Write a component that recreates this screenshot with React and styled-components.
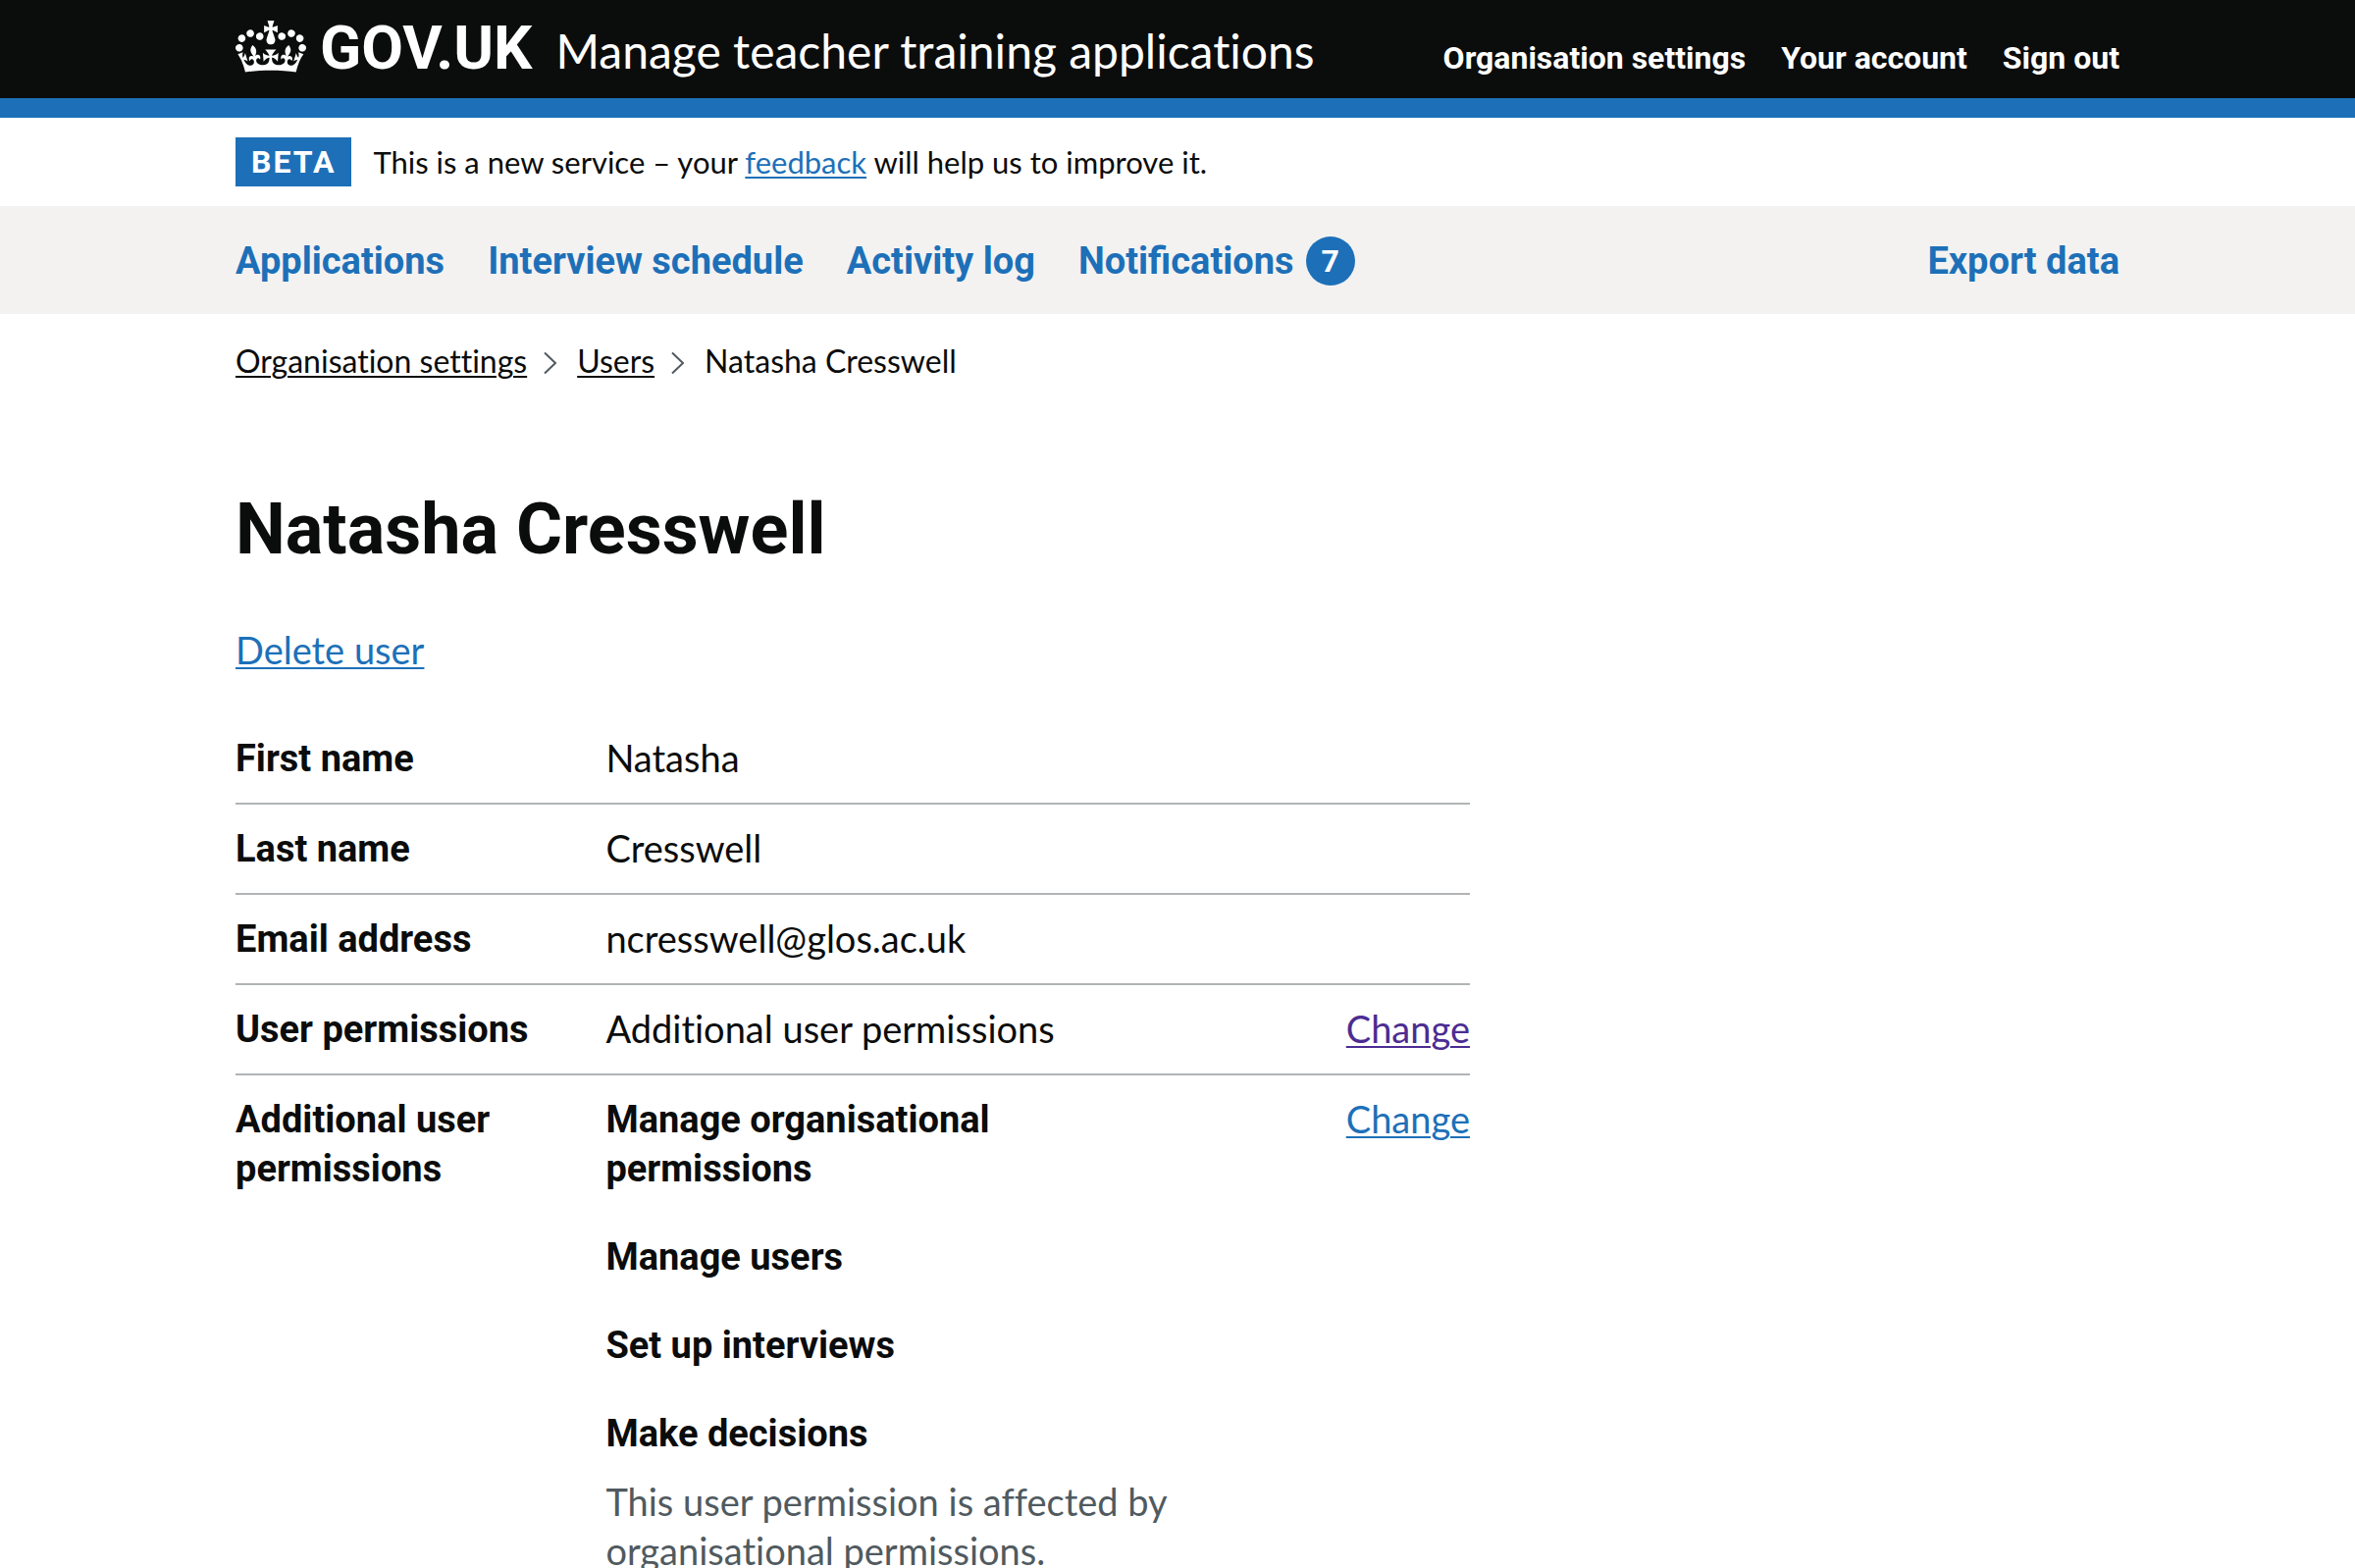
import React from "react";
import styled, { createGlobalStyle } from "styled-components";

const color = {
  ink: "#0b0c0c",
  blue: "#1d70b8",
  visited: "#4c2c92",
  secondary: "#505a5f",
  border: "#b1b4b6",
  panel: "#f3f2f1",
  white: "#ffffff",
};

const font = {
  text: '"Lato", "Liberation Sans", sans-serif',
  bold: '"Roboto", "Liberation Sans", sans-serif',
};

const GlobalStyle = createGlobalStyle`
  *, *::before, *::after { box-sizing: border-box; }
  body {
    margin: 0;
    background: ${color.white};
    color: ${color.ink};
    font-family: ${font.text};
    font-size: 38px;
    line-height: 50px;
    font-feature-settings: "liga" 0;
    -webkit-font-smoothing: antialiased;
  }
  h1, p, ul, ol, dl, dd { margin: 0; padding: 0; }
  ul, ol { list-style: none; }
`;

const Container = styled.div`
  max-width: 1920px;
  margin: 0 auto;

  @media (max-width: 2040px) {
    margin: 0 60px;
  }
`;

const Link = styled.a`
  color: ${(p) => p.$color || color.blue};
  text-decoration: underline;
  text-decoration-thickness: 2px;
  text-underline-offset: 3px;
`;

/* Header */

const Header = styled.header`
  background: ${color.ink};
  border-bottom: 20px solid ${color.blue};
  color: ${color.white};
`;

const HeaderBar = styled(Container)`
  display: flex;
  flex-wrap: wrap;
  justify-content: space-between;
  align-items: baseline;
  padding: 19px 0 21px;
`;

const Brand = styled.div`
  display: flex;
  align-items: baseline;
  gap: 24px;
`;

const HomeLink = styled.a`
  display: flex;
  align-items: baseline;
  gap: 14px;
  color: inherit;
  font: 700 62px/60px ${font.bold};
  text-decoration: none;
`;

const Crown = styled.svg`
  align-self: flex-start;
  width: 72px;
  height: 53px;
  margin-top: 2px;
  fill: currentColor;
`;

const ServiceLink = styled.a`
  color: inherit;
  font-size: 48px;
  line-height: 48px;
  text-decoration: none;
`;

const AccountNav = styled.ul`
  display: flex;
  flex-wrap: wrap;
  gap: 36px;
`;

const AccountLink = styled.a`
  display: block;
  color: inherit;
  font: 700 32px/40px ${font.bold};
  text-decoration: none;
`;

/* Phase banner */

const PhaseBanner = styled(Container)`
  display: flex;
  align-items: center;
  gap: 22px;
  padding: 20px 0;
`;

const Tag = styled.strong`
  padding: 5px 16px;
  background: ${color.blue};
  color: ${color.white};
  font: 700 32px/40px ${font.bold};
  letter-spacing: 2px;
  text-transform: uppercase;
`;

const PhaseText = styled.p`
  font-size: 31px;
  line-height: 40px;
`;

/* Primary navigation */

const PrimaryNav = styled.nav`
  background: ${color.panel};
`;

const NavBar = styled(Container)`
  display: flex;
  justify-content: space-between;
  padding: 31px 0 29px;
`;

const NavList = styled.ul`
  display: flex;
  flex-wrap: wrap;
  gap: 44px;
`;

const NavLink = styled.a`
  display: flex;
  align-items: center;
  gap: 12px;
  color: ${color.blue};
  font: 700 38px/50px ${font.bold};
  text-decoration: none;
`;

const Badge = styled.span`
  width: 50px;
  height: 50px;
  border-radius: 50%;
  background: ${color.blue};
  color: ${color.white};
  font-size: 32px;
  text-align: center;
`;

/* Breadcrumbs */

const Breadcrumbs = styled.ol`
  display: flex;
  flex-wrap: wrap;
  margin: 28px 0 30px;
  font-size: 32px;
  line-height: 40px;
`;

const Crumb = styled.li`
  display: flex;
  align-items: center;
`;

const Chevron = styled.svg`
  width: 14px;
  height: 24px;
  margin: 4px 20px 0 17px;
  fill: none;
  stroke: ${color.secondary};
  stroke-width: 2;
`;

/* Page content */

const Main = styled.main`
  max-width: 1258px;
  padding-top: 82px;
`;

const Title = styled.h1`
  margin-bottom: 57px;
  font: 700 72px/80px ${font.bold};
`;

const SummaryList = styled.dl`
  margin-top: 41px;
`;

const Row = styled.div`
  display: grid;
  grid-template-columns: 30% 50% 20%;
  border-bottom: 2px solid ${color.border};
`;

const Key = styled.dt`
  padding: 20px 40px 20px 0;
  font-family: ${font.bold};
  font-weight: 700;
`;

const Value = styled.dd`
  padding: 19px 40px 21px 0;
`;

const Action = styled.dd`
  padding: 19px 0 21px;
  text-align: right;
`;

const Permissions = styled.ul`
  display: grid;
  gap: 40px;
  padding-top: 1px;
`;

const Permission = styled.li`
  font-family: ${font.bold};
  font-weight: 700;
`;

const Note = styled.p`
  margin-top: 19px;
  color: ${color.secondary};
  font-family: ${font.text};
  font-weight: 400;
`;

const CROWN_PATH =
  "M25 30.2c3.5 1.5 7.7-.2 9.1-3.7 1.5-3.6-.2-7.8-3.9-9.2-3.6-1.4-7.6.3-9.1 3.9-1.4 3.5.3 7.5 3.9 9zM9 39.5c3.6 1.5 7.8-.2 9.2-3.7 1.5-3.6-.2-7.8-3.9-9.1-3.6-1.5-7.6.2-9.1 3.8-1.4 3.5.3 7.5 3.8 9zM4.4 57.2c3.5 1.5 7.7-.2 9.1-3.8 1.5-3.6-.2-7.7-3.9-9.1-3.5-1.5-7.6.3-9.1 3.8-1.4 3.5.3 7.6 3.9 9.1zm38.3-21.4c3.5 1.5 7.7-.2 9.1-3.8 1.5-3.6-.2-7.7-3.9-9.1-3.6-1.5-7.6.3-9.1 3.8-1.3 3.6.4 7.7 3.9 9.1zm64.4-5.6c-3.6 1.5-7.8-.2-9.1-3.7-1.5-3.6.2-7.8 3.8-9.2 3.6-1.4 7.7.3 9.2 3.9 1.3 3.5-.4 7.5-3.9 9zm15.9 9.3c-3.6 1.5-7.7-.2-9.1-3.7-1.5-3.6.2-7.8 3.7-9.1 3.6-1.5 7.7.2 9.2 3.8 1.5 3.5-.3 7.5-3.8 9zm4.7 17.7c-3.6 1.5-7.8-.2-9.2-3.8-1.5-3.6.2-7.7 3.9-9.1 3.6-1.5 7.7.3 9.2 3.8 1.3 3.5-.4 7.6-3.9 9.1zM89.3 35.8c-3.6 1.5-7.8-.2-9.2-3.8-1.4-3.6.2-7.7 3.9-9.1 3.6-1.5 7.7.3 9.2 3.8 1.4 3.6-.3 7.7-3.9 9.1zM69.7 17.7l8.9 4.7V9.3l-8.9 2.8c-.2-.3-.5-.6-.9-.9L72.4 0H59.6l3.5 11.2c-.3.3-.6.5-.9.9l-8.8-2.8v13.1l8.8-4.7c.3.3.6.7.9.9l-5 15.4v.1c-.2.8-.4 1.6-.4 2.4 0 4.1 3.1 7.5 7 8.1h.2c.3 0 .7.1 1 .1.4 0 .7 0 1-.1h.2c4-.6 7.1-4.1 7.1-8.1 0-.8-.1-1.7-.4-2.4V34l-5.1-15.4c.4-.2.7-.6 1-.9zM66 92.8c16.9 0 32.8 1.1 47.1 3.2 4-16.9 8.9-26.7 14-33.5l-9.6-3.4c1 4.9 1.1 7.2 0 10.2-1.5-1.4-3-4.3-4.2-8.7L108.6 76c2.8-2 5-3.2 7.5-3.3-4.4 9.4-10 11.9-13.6 11.2-4.3-.8-6.3-4.6-5.6-7.9 1-4.7 5.7-5.9 8-.5 4.3-8.7-3-11.4-7.6-8.8 7.1-7.2 7.9-13.5 2.1-21.1-8 6.1-8.1 12.3-4.5 20.8-4.7-5.4-12.1-2.5-9.5 6.2 3.4-5.2 7.9-2 7.2 3.1-.6 4.3-6.4 7.8-13.5 7.2-10.3-.9-10.9-8-11.2-13.8 2.5-.5 7.1 1.8 11 7.3L80.2 60c-4.1 4.4-8 5.3-12.3 5.4 1.4-4.4 8-11.6 8-11.6H55.5s6.4 7.2 7.9 11.6c-4.2-.1-8-1-12.3-5.4l1.4 16.4c3.9-5.5 8.5-7.7 10.9-7.3-.3 5.8-.9 12.8-11.1 13.8-7.2.6-12.9-2.9-13.5-7.2-.7-5 3.8-8.3 7.1-3.1 2.7-8.7-4.6-11.6-9.4-6.2 3.7-8.5 3.6-14.7-4.6-20.8-5.8 7.6-5 13.9 2.2 21.1-4.7-2.6-11.9.1-7.7 8.8 2.3-5.5 7.1-4.2 8.1.5.7 3.3-1.3 7.1-5.7 7.9-3.5.7-9-1.8-13.5-11.2 2.5.1 4.7 1.3 7.5 3.3l-4.7-15.4c-1.2 4.4-2.7 7.2-4.3 8.7-1.1-3-.9-5.3 0-10.2l-9.5 3.4c5 6.9 9.9 16.7 14 33.5 14.8-2.1 30.8-3.2 47.7-3.2z";

const accountLinks = ["Organisation settings", "Your account", "Sign out"];

const navLinks = [
  { label: "Applications" },
  { label: "Interview schedule" },
  { label: "Activity log" },
  { label: "Notifications", count: 7 },
];

const crumbs = ["Organisation settings", "Users"];

const details = [
  { key: "First name", value: "Natasha" },
  { key: "Last name", value: "Cresswell" },
  { key: "Email address", value: "ncresswell@glos.ac.uk" },
  {
    key: "User permissions",
    value: "Additional user permissions",
    change: color.visited,
  },
];

const permissions = [
  { name: "Manage organisational permissions" },
  { name: "Manage users" },
  { name: "Set up interviews" },
  {
    name: "Make decisions",
    note: "This user permission is affected by organisational permissions.",
  },
];

export default function App() {
  return (
    <>
      <GlobalStyle />
      <Header>
        <HeaderBar>
          <Brand>
            <HomeLink href="#">
              <Crown viewBox="0 0 132 97" aria-hidden="true">
                <path fillRule="evenodd" d={CROWN_PATH} />
              </Crown>
              GOV.UK
            </HomeLink>
            <ServiceLink href="#">Manage teacher training applications</ServiceLink>
          </Brand>
          <AccountNav>
            {accountLinks.map((label) => (
              <li key={label}>
                <AccountLink href="#">{label}</AccountLink>
              </li>
            ))}
          </AccountNav>
        </HeaderBar>
      </Header>

      <PhaseBanner>
        <Tag>Beta</Tag>
        <PhaseText>
          This is a new service – your <Link href="#">feedback</Link> will help us to improve it.
        </PhaseText>
      </PhaseBanner>

      <PrimaryNav>
        <NavBar>
          <NavList>
            {navLinks.map(({ label, count }) => (
              <li key={label}>
                <NavLink href="#">
                  {label}
                  {count && <Badge>{count}</Badge>}
                </NavLink>
              </li>
            ))}
          </NavList>
          <NavLink href="#">Export data</NavLink>
        </NavBar>
      </PrimaryNav>

      <Container>
        <Breadcrumbs>
          {crumbs.map((label) => (
            <Crumb key={label}>
              <Link href="#" $color={color.ink}>
                {label}
              </Link>
              <Chevron viewBox="0 0 14 24" aria-hidden="true">
                <path d="M1 1.5 12 12 1 22.5" />
              </Chevron>
            </Crumb>
          ))}
          <Crumb aria-current="page">Natasha Cresswell</Crumb>
        </Breadcrumbs>

        <Main>
          <Title>Natasha Cresswell</Title>
          <p>
            <Link href="#">Delete user</Link>
          </p>
          <SummaryList>
            {details.map(({ key, value, change }) => (
              <Row key={key}>
                <Key>{key}</Key>
                <Value>{value}</Value>
                {change && (
                  <Action>
                    <Link href="#" $color={change}>
                      Change
                    </Link>
                  </Action>
                )}
              </Row>
            ))}
            <Row>
              <Key>Additional user permissions</Key>
              <Value>
                <Permissions>
                  {permissions.map(({ name, note }) => (
                    <Permission key={name}>
                      {name}
                      {note && <Note>{note}</Note>}
                    </Permission>
                  ))}
                </Permissions>
              </Value>
              <Action>
                <Link href="#">Change</Link>
              </Action>
            </Row>
          </SummaryList>
        </Main>
      </Container>
    </>
  );
}
